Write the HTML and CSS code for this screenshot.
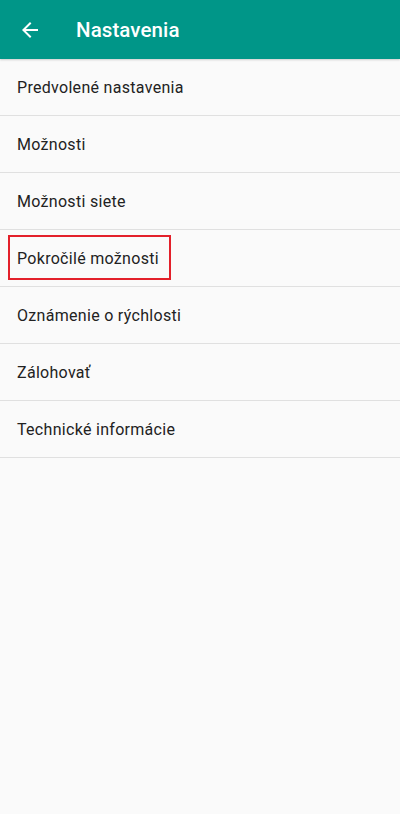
FILE: index.html
```html
<!DOCTYPE html>
<html lang="sk">
<head>
<meta charset="utf-8">
<title>Nastavenia</title>
<link rel="stylesheet" href="styles.css">
</head>
<body>
<header class="toolbar">
  <svg class="back" viewBox="0 0 24 24" width="24" height="24"><path d="M20 11H7.83l5.59-5.59L12 4l-8 8 8 8 1.41-1.41L7.83 13H20v-2z" fill="#fff"/></svg>
  <h1 class="title">Nastavenia</h1>
</header>
<ul class="list">
  <li class="item">Predvolené nastavenia</li>
  <li class="item">Možnosti</li>
  <li class="item">Možnosti siete</li>
  <li class="item item-marked"><span class="mark"></span>Pokročilé možnosti</li>
  <li class="item">Oznámenie o rýchlosti</li>
  <li class="item">Zálohovať</li>
  <li class="item">Technické informácie</li>
</ul>
</body>
</html>
```

FILE: styles.css
```css
html, body {
  margin: 0;
  padding: 0;
  background: #fafafa;
  font-family: Roboto, "Noto Sans", sans-serif;
}
.toolbar {
  height: 59px;
  background: #009688;
  display: flex;
  align-items: center;
  padding-left: 18px;
  box-shadow: 0 1px 2px rgba(0,0,0,0.18);
  position: relative;
  z-index: 1;
}
.back {
  display: block;
  flex: none;
}
.title {
  margin: 0 0 0 34px;
  color: #fff;
  font-size: 20.5px;
  font-weight: 500;
  letter-spacing: 0.1px;
}
.list {
  list-style: none;
  margin: 0;
  padding: 0;
}
.item {
  height: 56px;
  border-bottom: 1px solid #e0e0e0;
  display: flex;
  align-items: center;
  padding-left: 17px;
  font-size: 16px;
  letter-spacing: 0.3px;
  color: #222;
  position: relative;
}
.mark {
  position: absolute;
  left: 8px;
  top: 5px;
  width: 163px;
  height: 45px;
  box-sizing: border-box;
  border: 2px solid #e3202a;
}
```
